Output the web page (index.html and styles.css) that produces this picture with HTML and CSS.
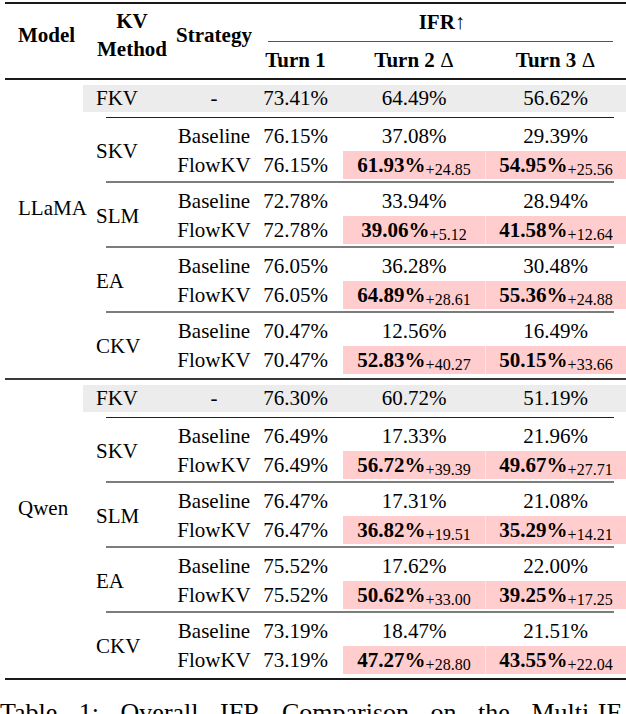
FILE: index.html
```html
<!DOCTYPE html>
<html>
<head>
<meta charset="utf-8">
<link rel="stylesheet" href="styles.css">
</head>
<body>
<div class="page">
  <div class="table">
    <div class="rule thick"></div>
    <div class="head">
      <div class="h-model">Model</div>
      <div class="h-kv">KV<br>Method</div>
      <div class="h-strat">Strategy</div>
      <div class="h-ifr">IFR<span class="math">↑</span></div>
      <div class="h-cmid"></div>
      <div class="h-t1">Turn 1</div>
      <div class="h-t2">Turn 2 <span class="math">Δ</span></div>
      <div class="h-t3">Turn 3 <span class="math">Δ</span></div>
    </div>
    <div class="rule thick"></div>

    <div class="section">
      <div class="model">LLaMA</div>
      <div class="body">
        <div class="fkv">
          <div class="kv">FKV</div><div class="strat">-</div><div class="t1">73.41%</div><div class="t2">64.49%</div><div class="t3">56.62%</div>
        </div>
        <div class="cmid first"></div>
        <div class="group">
          <div class="kv">SKV</div>
          <div class="strat">Baseline</div><div class="t1">76.15%</div><div class="t2">37.08%</div><div class="t3">29.39%</div>
          <div class="strat">FlowKV</div><div class="t1">76.15%</div><div class="t2 hl"><b>61.93%</b><span class="sub">+24.85</span></div><div class="t3 hl"><b>54.95%</b><span class="sub">+25.56</span></div>
        </div>
        <div class="cmid"></div>
        <div class="group">
          <div class="kv">SLM</div>
          <div class="strat">Baseline</div><div class="t1">72.78%</div><div class="t2">33.94%</div><div class="t3">28.94%</div>
          <div class="strat">FlowKV</div><div class="t1">72.78%</div><div class="t2 hl"><b>39.06%</b><span class="sub">+5.12</span></div><div class="t3 hl"><b>41.58%</b><span class="sub">+12.64</span></div>
        </div>
        <div class="cmid"></div>
        <div class="group">
          <div class="kv">EA</div>
          <div class="strat">Baseline</div><div class="t1">76.05%</div><div class="t2">36.28%</div><div class="t3">30.48%</div>
          <div class="strat">FlowKV</div><div class="t1">76.05%</div><div class="t2 hl"><b>64.89%</b><span class="sub">+28.61</span></div><div class="t3 hl"><b>55.36%</b><span class="sub">+24.88</span></div>
        </div>
        <div class="cmid"></div>
        <div class="group">
          <div class="kv">CKV</div>
          <div class="strat">Baseline</div><div class="t1">70.47%</div><div class="t2">12.56%</div><div class="t3">16.49%</div>
          <div class="strat">FlowKV</div><div class="t1">70.47%</div><div class="t2 hl"><b>52.83%</b><span class="sub">+40.27</span></div><div class="t3 hl"><b>50.15%</b><span class="sub">+33.66</span></div>
        </div>
      </div>
    </div>

    <div class="rule thick mid"></div>

    <div class="section">
      <div class="model">Qwen</div>
      <div class="body">
        <div class="fkv">
          <div class="kv">FKV</div><div class="strat">-</div><div class="t1">76.30%</div><div class="t2">60.72%</div><div class="t3">51.19%</div>
        </div>
        <div class="cmid first"></div>
        <div class="group">
          <div class="kv">SKV</div>
          <div class="strat">Baseline</div><div class="t1">76.49%</div><div class="t2">17.33%</div><div class="t3">21.96%</div>
          <div class="strat">FlowKV</div><div class="t1">76.49%</div><div class="t2 hl"><b>56.72%</b><span class="sub">+39.39</span></div><div class="t3 hl"><b>49.67%</b><span class="sub">+27.71</span></div>
        </div>
        <div class="cmid"></div>
        <div class="group">
          <div class="kv">SLM</div>
          <div class="strat">Baseline</div><div class="t1">76.47%</div><div class="t2">17.31%</div><div class="t3">21.08%</div>
          <div class="strat">FlowKV</div><div class="t1">76.47%</div><div class="t2 hl"><b>36.82%</b><span class="sub">+19.51</span></div><div class="t3 hl"><b>35.29%</b><span class="sub">+14.21</span></div>
        </div>
        <div class="cmid"></div>
        <div class="group">
          <div class="kv">EA</div>
          <div class="strat">Baseline</div><div class="t1">75.52%</div><div class="t2">17.62%</div><div class="t3">22.00%</div>
          <div class="strat">FlowKV</div><div class="t1">75.52%</div><div class="t2 hl"><b>50.62%</b><span class="sub">+33.00</span></div><div class="t3 hl"><b>39.25%</b><span class="sub">+17.25</span></div>
        </div>
        <div class="cmid"></div>
        <div class="group">
          <div class="kv">CKV</div>
          <div class="strat">Baseline</div><div class="t1">73.19%</div><div class="t2">18.47%</div><div class="t3">21.51%</div>
          <div class="strat">FlowKV</div><div class="t1">73.19%</div><div class="t2 hl"><b>47.27%</b><span class="sub">+28.80</span></div><div class="t3 hl"><b>43.55%</b><span class="sub">+22.04</span></div>
        </div>
      </div>
    </div>

    <div class="rule thick"></div>
  </div>
  <p class="caption">Table 1: Overall IFR Comparison on the Multi-IF</p>
</div>
</body>
</html>
```

FILE: styles.css
```css
html, body {
  margin: 0;
  padding: 0;
  overflow: hidden;
  background: #ffffff;
}

.page {
  width: 626px;
  height: 714px;
  overflow: hidden;
  padding-top: 2px;
  box-sizing: border-box;
  font-family: "Liberation Serif", "Times New Roman", serif;
  font-size: 21px;
  color: #000;
}

.table {
  margin-left: 5px;
  width: 621px;
}

.rule {
  height: 2px;
  background: #1a1a1a;
}

.rule.mid {
  background: #3a3a3a;
}

/* Header */
.head {
  display: grid;
  grid-template-columns: 78px 87px 88px 85px 142px 1fr;
  grid-template-rows: 37px 1px 36px;
  font-weight: bold;
}

.head .math {
  font-weight: normal;
}

.h-model {
  grid-column: 1;
  grid-row: 1 / 4;
  padding: 19px 0 0 13px;
  line-height: 24px;
}

.h-kv {
  grid-column: 2;
  grid-row: 1 / 4;
  padding: 3px 2px 0 13px;
  line-height: 28px;
  text-align: center;
}

.h-strat {
  grid-column: 3;
  grid-row: 1 / 4;
  padding-top: 19px;
  line-height: 24px;
  text-align: center;
}

.h-ifr {
  grid-column: 4 / 7;
  grid-row: 1;
  line-height: 37px;
  text-align: center;
}

.h-cmid {
  grid-column: 4 / 7;
  grid-row: 2;
  margin: 0 13px 0 10px;
  background: #555;
}

.h-t1, .h-t2, .h-t3 {
  grid-row: 3;
  line-height: 36px;
  text-align: center;
}

.h-t1 { grid-column: 4; padding-right: 10px; }
.h-t2 { grid-column: 5; }
.h-t3 { grid-column: 6; }

/* Sections */
.section {
  display: grid;
  grid-template-columns: 78px 1fr;
  padding-bottom: 2px;
}

.model {
  padding: 116px 0 0 13px;
  line-height: 24px;
  white-space: nowrap;
}

.fkv {
  display: grid;
  grid-template-columns: 87px 88px 85px 142px 1fr;
  margin: 5px 0;
  height: 27px;
  line-height: 27px;
  background: #ececec;
}

.kv {
  padding-left: 13px;
}

.strat {
  text-align: center;
}

.t1 {
  text-align: center;
  padding-right: 10px;
}

.t2, .t3 {
  text-align: center;
}

.cmid {
  height: 2px;
  margin: 0 12px 0 23px;
  background: #7c7c7c;
}

.cmid.first {
  height: 1px;
  background: #222;
}

.group {
  display: grid;
  grid-template-columns: 87px 88px 85px 142px 1fr;
  grid-template-rows: 29px 28px;
  padding: 4px 0 2px;
  line-height: 29px;
}

.group .kv {
  grid-row: 1 / 3;
  align-self: center;
  line-height: 24px;
}

.group > div:nth-child(n+6) {
  line-height: 28px;
}

.hl {
  background: #ffcdcd;
  white-space: nowrap;
}

.t3.hl {
  border-left: 1px solid #ffe3e3;
}

.hl b {
  font-weight: bold;
}

.sub {
  font-size: 16px;
  line-height: 1;
  vertical-align: -3px;
}

.caption {
  margin: 18px 0 0 0;
  font-size: 26px;
  line-height: 30px;
  width: 626px;
  white-space: nowrap;
  word-spacing: 15px;
}
```
